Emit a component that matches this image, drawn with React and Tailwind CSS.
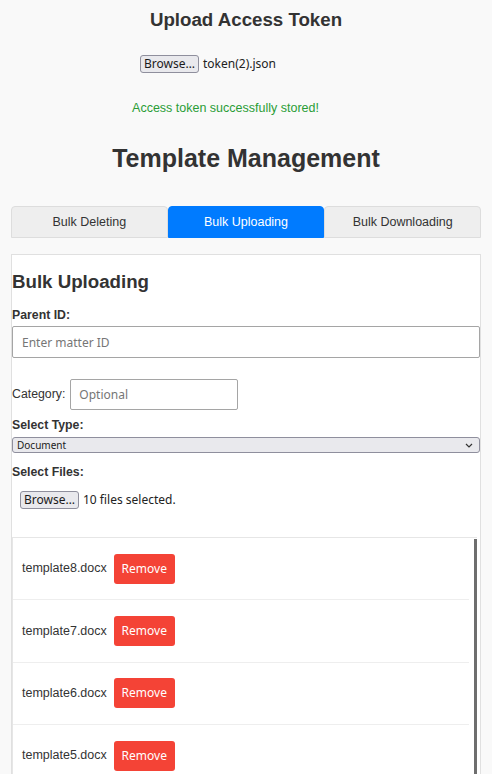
import { useState } from 'react';

const initialFiles = [
  'template8.docx',
  'template7.docx',
  'template6.docx',
  'template5.docx',
  'template4.docx',
  'template3.docx',
  'template2.docx',
  'template1.docx',
  'template10.docx',
  'template9.docx',
];

const tabs = ['Bulk Deleting', 'Bulk Uploading', 'Bulk Downloading'];

function FakeFileInput({ label, className = '' }) {
  return (
    <div className={`flex items-center font-['Noto_Sans',sans-serif] text-[12px] text-[#222] ${className}`}>
      <button className="h-[18px] px-[3px] leading-none bg-[#e9e9ed] border border-[#8f8f9d] rounded-[3px] text-[#1b1b1b]">
        Browse…
      </button>
      <span className="ml-[4px]">{label}</span>
    </div>
  );
}

export default function App() {
  const [activeTab, setActiveTab] = useState('Bulk Uploading');
  const [files, setFiles] = useState(initialFiles);

  return (
    <div className="h-screen overflow-hidden bg-[#f9f9f9] font-['Liberation_Sans',Arial,sans-serif] text-[#333]">
      {/* Access token */}
      <h2 className="pt-[9px] text-center text-[18.7px] leading-[22px] font-bold">Upload Access Token</h2>
      <div className="mt-[24px] w-[212px] mx-auto">
        <FakeFileInput label="token(2).json" />
      </div>
      <div className="mt-[28px] flex justify-center">
        <p className="mr-[41px] text-[12.5px] leading-[15px] text-[#2a9d36]">Access token successfully stored!</p>
      </div>

      <h1 className="mt-[28px] text-center text-[25px] leading-[29px] font-bold">Template Management</h1>

      {/* Tabs */}
      <div className="mt-[33px] mx-[11px] grid grid-cols-3 h-[32px]">
        {tabs.map((tab) => (
          <button
            key={tab}
            onClick={() => setActiveTab(tab)}
            className={`text-[12.5px] rounded-t-[4px] border ${
              activeTab === tab
                ? 'bg-[#007bff] border-[#007bff] text-white'
                : 'bg-[#eeeeee] border-[#dddddd] text-[#333]'
            }`}
          >
            {tab}
          </button>
        ))}
      </div>

      {/* Panel */}
      <div className="mt-[16px] mx-[11px] bg-white border border-[#e0e0e0]">
        <h2 className="pt-[16px] text-[18.7px] leading-[22px] font-bold">Bulk Uploading</h2>

        <label className="block mt-[15px] text-[12.3px] leading-[15px] font-bold">Parent ID:</label>
        <input
          placeholder="Enter matter ID"
          className="mt-[3px] block w-full h-[32px] px-[9px] border border-[#a5a5a5] rounded-[2px] font-['Noto_Sans',sans-serif] text-[12px] placeholder:text-[#767676] outline-none"
        />

        <div className="mt-[21px] flex items-center">
          <span className="text-[12.3px]">Category:</span>
          <input
            placeholder="Optional"
            className="ml-[5px] w-[168px] h-[31px] px-[8px] border border-[#a5a5a5] rounded-[2px] font-['Noto_Sans',sans-serif] text-[12px] placeholder:text-[#767676] outline-none"
          />
        </div>

        <label className="block mt-[8px] text-[12.3px] leading-[15px] font-bold">Select Type:</label>
        <div className="mt-[4px] h-[16px] flex items-center justify-between px-[4px] bg-[#e9e9ed] border border-[#8f8f9d] rounded-[3px] font-['Noto_Sans',sans-serif] text-[10px] text-[#1b1b1b]">
          <span>Document</span>
          <svg width="8" height="5" viewBox="0 0 8 5" className="mr-[2px]">
            <path d="M1 1l3 3 3-3" fill="none" stroke="#333" strokeWidth="1.2" />
          </svg>
        </div>

        <label className="block mt-[12px] text-[12.3px] leading-[15px] font-bold">Select Files:</label>
        <FakeFileInput label="10 files selected." className="mt-[11px] ml-[8px]" />

        {/* File list */}
        <div className="relative mt-[28px] mr-[3px] h-[300px] overflow-hidden border-t border-l border-[#e6e6e6]">
          <div className="absolute top-[1px] right-0 w-[3px] h-full bg-[#6e6e6e]" />
          {files.map((name) => (
            <div key={name} className="mr-[8px] h-[62.4px] flex items-center pl-[9px] border-b border-[#eeeeee]">
              <span className="text-[12.5px]">{name}</span>
              <button
                onClick={() => setFiles(files.filter((f) => f !== name))}
                className="ml-[7px] w-[61px] h-[30px] bg-[#f44336] text-white rounded-[3px] font-['Noto_Sans',sans-serif] text-[12px]"
              >
                Remove
              </button>
            </div>
          ))}
        </div>
      </div>
    </div>
  );
}
